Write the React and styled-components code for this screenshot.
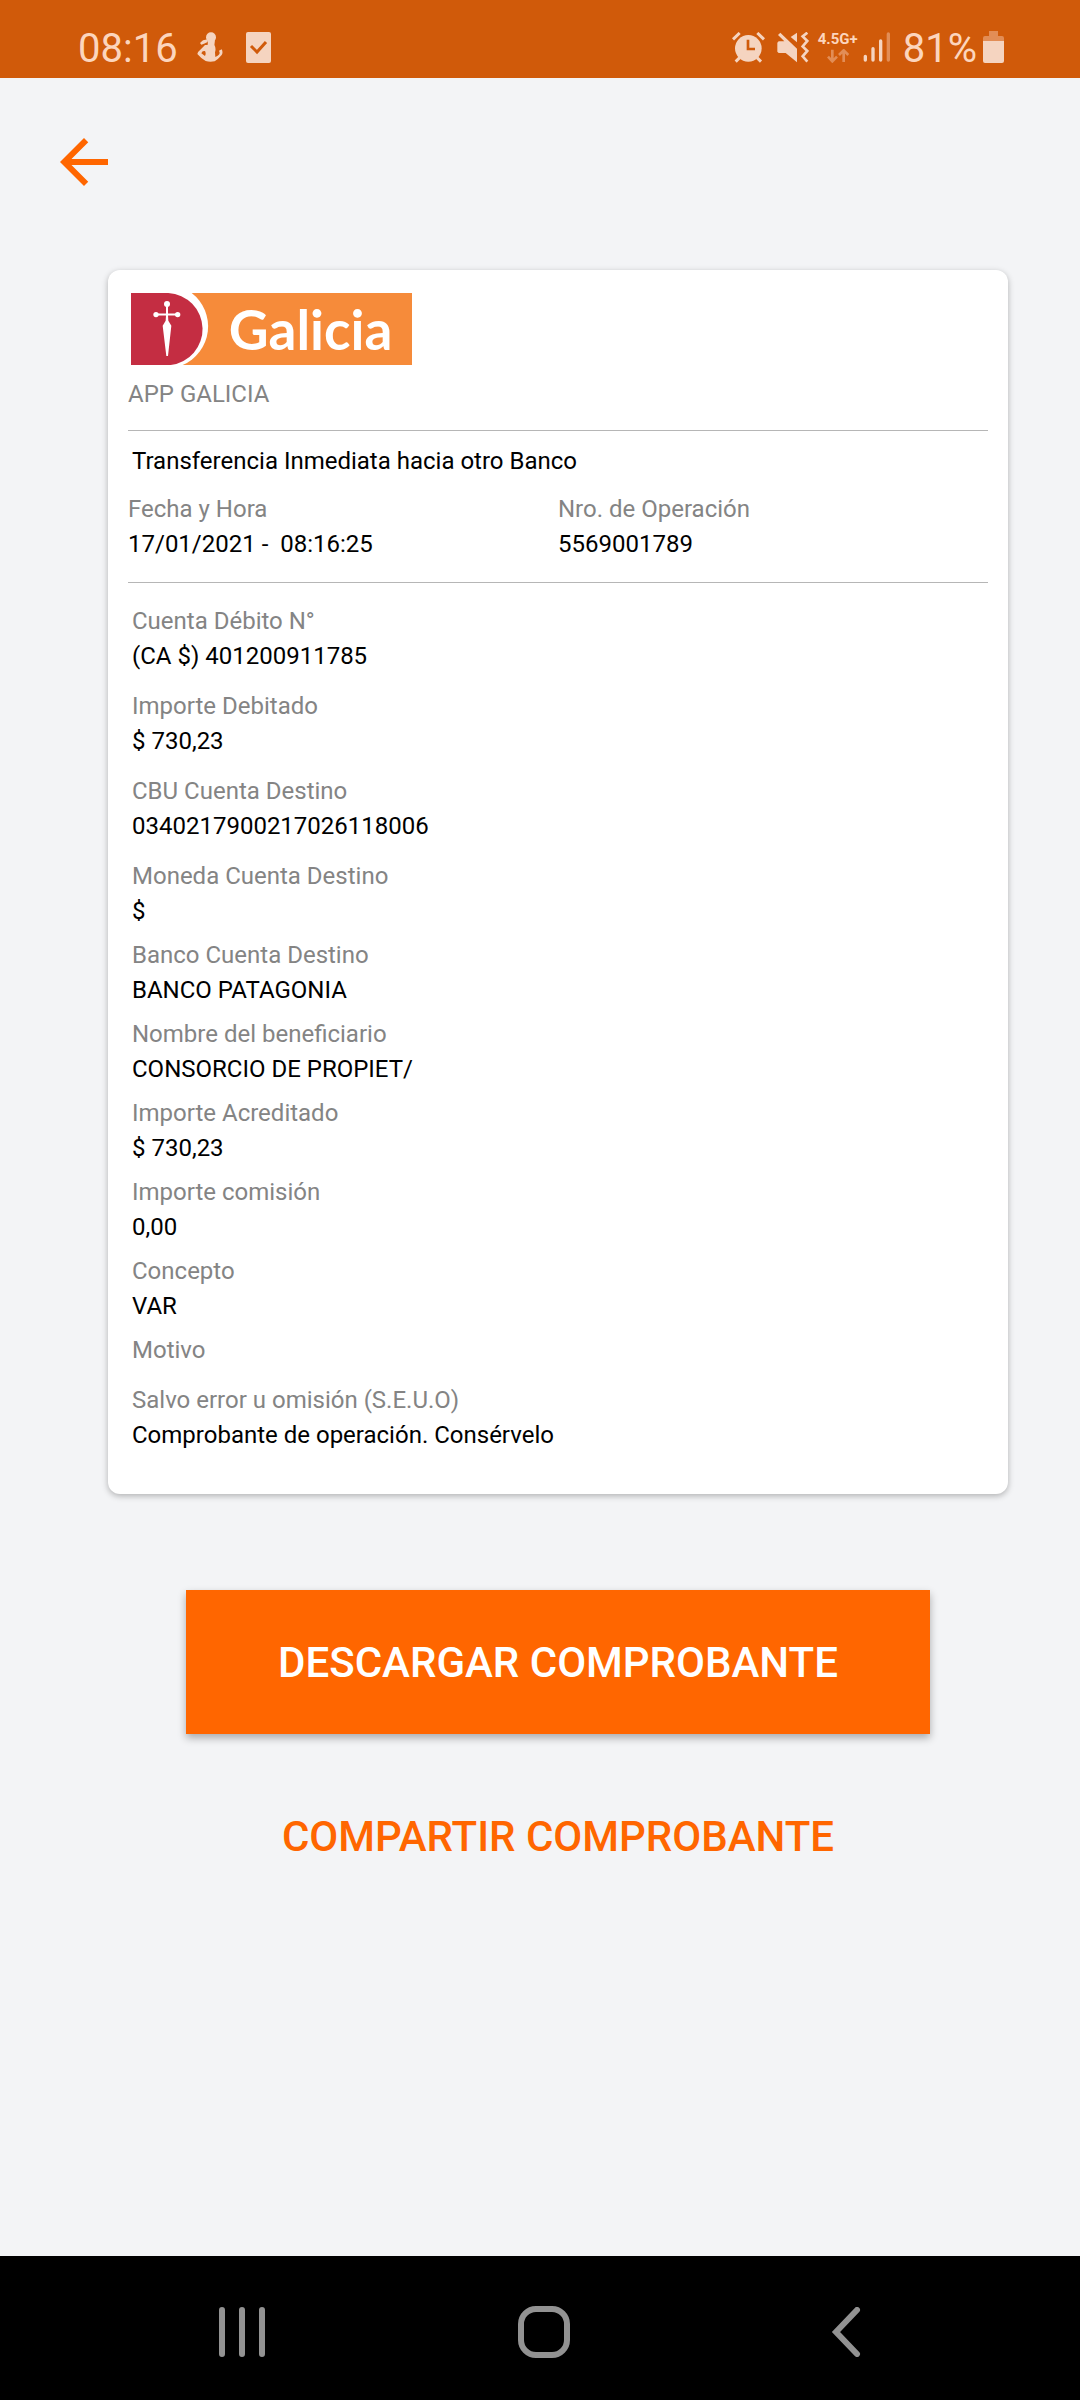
import React from "react";
import styled, { createGlobalStyle } from "styled-components";

const tint = "#f5d4c0";
const dim = "#e28d56";
const orange = "#ff6600";

const GlobalStyle = createGlobalStyle`
  *, *::before, *::after { box-sizing: border-box; }
  body {
    margin: 0;
    background: #f3f4f6;
    font-family: Roboto, "Liberation Sans", sans-serif;
  }
  button { font-family: inherit; border: 0; padding: 0; background: none; cursor: pointer; }
  svg { display: block; }
`;

const Screen = styled.div`
  min-height: 100vh;
  display: flex;
  flex-direction: column;
`;

const StatusBar = styled.header`
  height: 78px;
  padding: 16px 76px 0 78px;
  display: flex;
  align-items: center;
  justify-content: space-between;
  background: #d05a0a;
  color: #fcd5bd;
`;

const StatusGroup = styled.div`
  display: flex;
  align-items: center;
  gap: ${(p) => p.$gap}px;
`;

const StatusText = styled.span`
  padding-top: 4px;
  font-size: 40px;
  line-height: 48px;
`;

const Network = styled.div`
  display: flex;
  flex-direction: column;
  align-items: center;
  gap: 2px;
`;

const NetworkLabel = styled.span`
  font-size: 15px;
  line-height: 16px;
  font-weight: 700;
`;

const TopBar = styled.nav`
  padding: 48px 48px 72px;
`;

const BackButton = styled.button`
  display: block;
  width: 72px;
  height: 72px;
`;

const Content = styled.main`
  flex: 1;
  padding: 0 72px 72px 108px;
`;

const Card = styled.article`
  padding: 23px 20px 41px;
  border-radius: 12px;
  background: #fff;
  box-shadow: 0 2px 6px rgba(0, 0, 0, 0.28);
  font-size: 24px;
  line-height: 35px;
  color: #000;
`;

const Logo = styled.svg`
  width: 281px;
  height: 72px;
  margin: 0 3px 12px;
`;

const Source = styled.p`
  margin: 0;
  padding-bottom: 18px;
  color: #848484;
`;

const Summary = styled.section`
  padding: 13px 0 20px;
  border-top: 1px solid #b6b6b6;
  border-bottom: 1px solid #b6b6b6;
`;

const Title = styled.h1`
  margin: 0 0 13px;
  padding-left: 4px;
  font-size: 24px;
  line-height: 35px;
  font-weight: 400;
`;

const SummaryGrid = styled.dl`
  margin: 0;
  display: grid;
  grid-template-columns: 1fr 1fr;
`;

const Details = styled.dl`
  margin: 0;
  padding: 21px 4px 0;
`;

const Field = styled.div`
  margin-bottom: ${(p) => p.$space || 0}px;
`;

const Label = styled.dt`
  color: #848484;
`;

const Value = styled.dd`
  margin: 0;
  white-space: pre-wrap;
`;

const Actions = styled.div`
  display: flex;
  flex-direction: column;
  gap: 30px;
  padding: 96px 78px 0;
`;

const Action = styled.button`
  height: 144px;
  font-size: 42px;
  font-weight: 500;
  color: ${(p) => (p.$filled ? "#fff" : orange)};
  background: ${(p) => (p.$filled ? orange : "transparent")};
  box-shadow: ${(p) => (p.$filled ? "0 4px 8px rgba(0, 0, 0, 0.3)" : "none")};
`;

const NavBar = styled.footer`
  height: 144px;
  padding: 8px 83px 0 91px;
  display: grid;
  grid-template-columns: repeat(3, 1fr);
  background: #000;
`;

const NavButton = styled.button`
  display: flex;
  align-items: center;
  justify-content: center;
`;

const details = [
  { label: "Cuenta Débito N°", value: "(CA $) 401200911785", space: 15 },
  { label: "Importe Debitado", value: "$ 730,23", space: 15 },
  { label: "CBU Cuenta Destino", value: "0340217900217026118006", space: 15 },
  { label: "Moneda Cuenta Destino", value: "$", space: 9 },
  { label: "Banco Cuenta Destino", value: "BANCO PATAGONIA", space: 9 },
  { label: "Nombre del beneficiario", value: "CONSORCIO DE PROPIET/", space: 9 },
  { label: "Importe Acreditado", value: "$ 730,23", space: 9 },
  { label: "Importe comisión", value: "0,00", space: 9 },
  { label: "Concepto", value: "VAR", space: 9 },
  { label: "Motivo", value: "", space: 15 },
  { label: "Salvo error u omisión (S.E.U.O)", value: "Comprobante de operación. Consérvelo" },
];

const PersonIcon = () => (
  <svg width="26" height="30" viewBox="470 97 78 90" fill={tint} aria-hidden="true">
    <ellipse cx="512" cy="113" rx="15" ry="15" />
    <path d="M503 122 L524 122 L522 136 L502 136 Z" />
    <path d="M479 130 L488 122 L502 119 L502 127 L491 132 L483 135 Z" />
    <path
      fillRule="evenodd"
      d="M494 136 L522 135 Q528 146 524 158 L525 172 Q538 166 538 159 L536 153 L544 149 Q549 158 544 166 Q534 178 523 185 Q508 188 496 184 Q480 174 471 163 Q472 156 480 150 Z M487 155 L483 161 L494 169 Q498 162 494 154 Z"
    />
  </svg>
);

const TaskIcon = () => (
  <svg width="25" height="31" viewBox="0 0 25 31" aria-hidden="true">
    <rect width="25" height="31" rx="2" fill={tint} />
    <path d="M5 14 L11 20 L20 10" fill="none" stroke="#d05a0a" strokeWidth="3" />
  </svg>
);

const AlarmIcon = () => (
  <svg width="33" height="31" viewBox="95 95 99 93" aria-hidden="true">
    <g stroke={tint} strokeWidth="9" fill="none">
      <path d="M98 117 L118 98 M171 98 L191 117" />
      <path d="M118 172 L106 184 M170 172 L182 184" />
    </g>
    <circle cx="144" cy="144" r="40" fill={tint} />
    <path d="M143 118 V146 H164" fill="none" stroke="#d05a0a" strokeWidth="8" />
  </svg>
);

const MuteIcon = () => (
  <svg width="32" height="31" viewBox="231 95 96 93" aria-hidden="true">
    <path d="M232 127 L236 123 H253 L234 104 L241 97 L291 145 V186 L257 158 H236 L232 154 Z" fill={tint} />
    <path d="M291 97 V126 L272 110 Z" fill={tint} />
    <path
      d="M322 97 L308 108 L322 122 L308 138 L322 152 L308 168 L322 184"
      fill="none"
      stroke={tint}
      strokeWidth="8"
    />
  </svg>
);

const DataArrows = () => (
  <svg width="22" height="14" viewBox="381 151 66 42" fill="none" stroke={dim} strokeWidth="8" aria-hidden="true">
    <path d="M397 153 V188 M384 174 L397 188 L411 174" />
    <path d="M431 190 V155 M417 169 L431 155 L445 169" />
  </svg>
);

const SignalIcon = () => (
  <svg width="28" height="30" viewBox="488 98 84 90" strokeWidth="10" strokeLinecap="round" aria-hidden="true">
    <path d="M495 171 V182 M518 148 V182 M541 125 V182" stroke={tint} />
    <path d="M564 104 V182" stroke={dim} />
  </svg>
);

const BatteryIcon = () => (
  <svg width="21" height="32" viewBox="0 0 21 32" aria-hidden="true">
    <path d="M6 0 H15 V5 H19 Q21 5 21 7 V10 H0 V7 Q0 5 2 5 H6 Z" fill={dim} />
    <path d="M0 10 H21 V30 Q21 32 19 32 H2 Q0 32 0 30 Z" fill={tint} />
  </svg>
);

const GaliciaLogo = () => (
  <Logo viewBox="93 98 843 217" preserveAspectRatio="none" role="img" aria-label="Galicia">
    <rect x="93" y="98" width="843" height="217" fill="#f68b3a" />
    <path d="M93 98 H275 A127 127 0 0 1 248 315 H93 Z" fill="#fff" />
    <path d="M93 98 H205 A109 109 0 0 1 212 315 H93 Z" fill="#c42d42" />
    <g fill="#fff">
      <circle cx="201" cy="131" r="9" />
      <circle cx="168" cy="163" r="8" />
      <circle cx="233" cy="163" r="8" />
      <path d="M198 134 H204 V160 H232 V166 H204 L205 182 L214 197 L204 288 H199 L188 197 L197 182 L198 166 H169 V160 H198 Z" />
    </g>
    <text x="386" y="270" fill="#fff" fontFamily="Lato, sans-serif" fontWeight="700" fontSize="165">
      Galicia
    </text>
  </Logo>
);

export default function App() {
  return (
    <Screen>
      <GlobalStyle />
      <StatusBar>
        <StatusGroup $gap={19}>
          <StatusText>08:16</StatusText>
          <StatusGroup $gap={23}>
            <PersonIcon />
            <TaskIcon />
          </StatusGroup>
        </StatusGroup>
        <StatusGroup $gap={12}>
          <AlarmIcon />
          <StatusGroup $gap={9}>
            <MuteIcon />
            <StatusGroup $gap={5}>
              <Network>
                <NetworkLabel>4.5G+</NetworkLabel>
                <DataArrows />
              </Network>
              <SignalIcon />
            </StatusGroup>
          </StatusGroup>
          <StatusGroup $gap={6}>
            <StatusText>81%</StatusText>
            <BatteryIcon />
          </StatusGroup>
        </StatusGroup>
      </StatusBar>

      <TopBar>
        <BackButton type="button" aria-label="Volver">
          <svg width="72" height="72" viewBox="0 0 24 24" fill={orange} aria-hidden="true">
            <path d="M20 11H7.83l5.59-5.59L12 4l-8 8 8 8 1.41-1.41L7.83 13H20v-2z" />
          </svg>
        </BackButton>
      </TopBar>

      <Content>
        <Card>
          <GaliciaLogo />
          <Source>APP GALICIA</Source>
          <Summary>
            <Title>Transferencia Inmediata hacia otro Banco</Title>
            <SummaryGrid>
              <Field>
                <Label>Fecha y Hora</Label>
                <Value>{"17/01/2021 -  08:16:25"}</Value>
              </Field>
              <Field>
                <Label>Nro. de Operación</Label>
                <Value>5569001789</Value>
              </Field>
            </SummaryGrid>
          </Summary>
          <Details>
            {details.map(({ label, value, space }) => (
              <Field key={label} $space={space}>
                <Label>{label}</Label>
                <Value>{value}</Value>
              </Field>
            ))}
          </Details>
        </Card>
        <Actions>
          <Action type="button" $filled>DESCARGAR COMPROBANTE</Action>
          <Action type="button">COMPARTIR COMPROBANTE</Action>
        </Actions>
      </Content>

      <NavBar>
        <NavButton type="button" aria-label="Recientes">
          <svg width="46" height="50" viewBox="0 0 46 50" stroke="#929292" strokeWidth="6" strokeLinecap="round" aria-hidden="true">
            <path d="M3 3 V47 M23 3 V47 M43 3 V47" />
          </svg>
        </NavButton>
        <NavButton type="button" aria-label="Inicio">
          <svg width="52" height="52" viewBox="0 0 52 52" fill="none" stroke="#929292" strokeWidth="6" aria-hidden="true">
            <rect x="3" y="3" width="46" height="46" rx="15" />
          </svg>
        </NavButton>
        <NavButton type="button" aria-label="Atrás">
          <svg width="30" height="50" viewBox="0 0 30 50" fill="none" stroke="#929292" strokeWidth="6" strokeLinecap="round" aria-hidden="true">
            <path d="M26 3 L5 25 L26 47" />
          </svg>
        </NavButton>
      </NavBar>
    </Screen>
  );
}
